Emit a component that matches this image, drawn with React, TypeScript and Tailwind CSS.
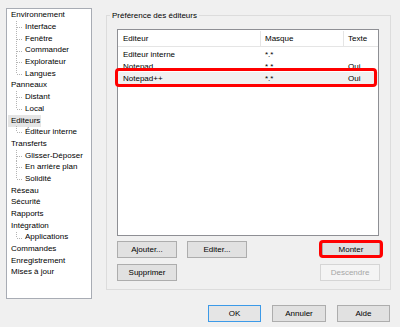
type Node = { label: string; children?: string[]; selected?: boolean };

const tree: Node[] = [
  { label: "Environnement", children: ["Interface", "Fenêtre", "Commander", "Explorateur", "Langues"] },
  { label: "Panneaux", children: ["Distant", "Local"] },
  { label: "Editeurs", children: ["Éditeur interne"], selected: true },
  { label: "Transferts", children: ["Glisser-Déposer", "En arrière plan", "Solidité"] },
  { label: "Réseau" },
  { label: "Sécurité" },
  { label: "Rapports" },
  { label: "Intégration", children: ["Applications"] },
  { label: "Commandes" },
  { label: "Enregistrement" },
  { label: "Mises à jour" },
];

const editors = [
  { name: "Editeur interne", mask: "*.*", text: "" },
  { name: "Notepad", mask: "*.*", text: "Oui" },
  { name: "Notepad++", mask: "*.*", text: "Oui", selected: true },
];

function Connector({ last }: { last: boolean }) {
  return (
    <svg width="14" height="11.7" className="shrink-0">
      <line x1="5.5" y1="0" x2="5.5" y2={last ? 6 : 11.7} stroke="#b4b4b4" strokeDasharray="1 1" />
      <line x1="6" y1="6.5" x2="12" y2="6.5" stroke="#b4b4b4" strokeDasharray="1 1" />
    </svg>
  );
}

function Btn({
  children,
  w = "w-[60px]",
  disabled,
  primary,
}: {
  children: string;
  w?: string;
  disabled?: boolean;
  primary?: boolean;
}) {
  return (
    <div
      className={
        "h-[17px] flex items-center justify-center border " +
        w +
        " " +
        (disabled
          ? "border-[#d5d5d5] bg-[#f4f4f4] text-[#a6a6a6]"
          : primary
            ? "border-[#3c9ae8] bg-[#e5e5e5] text-black"
            : "border-[#adadad] bg-[#e1e1e1] text-black")
      }
    >
      {children}
    </div>
  );
}

export default function App() {
  return (
    <div className="w-[400px] h-[327px] bg-[#f0f0f0] font-['Liberation_Sans',Arial,sans-serif] text-[8px] text-black flex flex-col overflow-hidden">
      <div className="flex pt-[8px] pl-[6px]">
        {/* tree */}
        <div className="w-[86px] h-[291px] bg-white border border-[#a8acb4] pl-[4px] pt-[0.5px]">
          {tree.map((n) => (
            <div key={n.label}>
              <div className="h-[11.7px] flex items-center">
                <span className={n.selected ? "-ml-[3px] pl-[3px] pr-[1px] bg-[#e5e5e5]" : ""}>{n.label}</span>
              </div>
              {n.children?.map((c, i) => (
                <div key={c} className="h-[11.7px] flex items-center">
                  <Connector last={i === n.children!.length - 1} />
                  <span>{c}</span>
                </div>
              ))}
            </div>
          ))}
        </div>

        {/* group box */}
        <div className="ml-[14px] mt-[7px] w-[285px] h-[275px] border border-[#dcdcdc] relative pt-[13px] pl-[10px]">
          <div className="absolute -top-[6px] left-[3px] bg-[#f0f0f0] px-[2px] leading-[11px]">
            Préférence des éditeurs
          </div>

          <div className="w-[262px] h-[207px] bg-white border border-[#8e8f94] relative">
            <div className="flex h-[17px] pt-[1px] border-b border-[#e5e5e5]">
              <div className="w-[143px] border-r border-[#e5e5e5] pl-[5px] flex items-center">Editeur</div>
              <div className="w-[83px] border-r border-[#e5e5e5] pl-[4px] flex items-center">Masque</div>
              <div className="flex-1 pl-[4px] flex items-center">Texte</div>
            </div>
            {editors.map((e) => (
              <div
                key={e.name}
                className={
                  "flex items-center " + (e.selected ? "h-[13px] mt-[1px] pt-[1px] bg-[#f0f0f0]" : "h-[12px] pt-[3px]")
                }
              >
                <div className="w-[143px] pl-[5px]">{e.name}</div>
                <div className="w-[83px] pl-[4px]">{e.mask}</div>
                <div className="flex-1 pl-[4px]">{e.text}</div>
              </div>
            ))}
            <div className="absolute left-[-3px] top-[38px] w-[262px] h-[19px] border-[3px] border-[#ff0000] rounded-[4px]" />
          </div>

          <div className="flex mt-[5px] w-[262px]">
            <Btn>Ajouter...</Btn>
            <div className="ml-[10px]">
              <Btn>Editer...</Btn>
            </div>
            <div className="ml-auto mr-[-1px] relative">
              <Btn w="w-[58px]">Monter</Btn>
              <div className="absolute -left-[3px] -top-[1px] w-[64px] h-[18px] border-[3px] border-[#ff0000] rounded-[4px]" />
            </div>
          </div>
          <div className="flex mt-[6px] w-[262px]">
            <Btn>Supprimer</Btn>
            <div className="ml-auto mr-[-1px]">
              <Btn disabled>Descendre</Btn>
            </div>
          </div>
        </div>
      </div>

      <div className="flex justify-end gap-[11px] pr-[10px] mt-[6px]">
        <Btn w="w-[53px]" primary>
          OK
        </Btn>
        <Btn w="w-[54px]">Annuler</Btn>
        <Btn w="w-[53px]">Aide</Btn>
      </div>
    </div>
  );
}
